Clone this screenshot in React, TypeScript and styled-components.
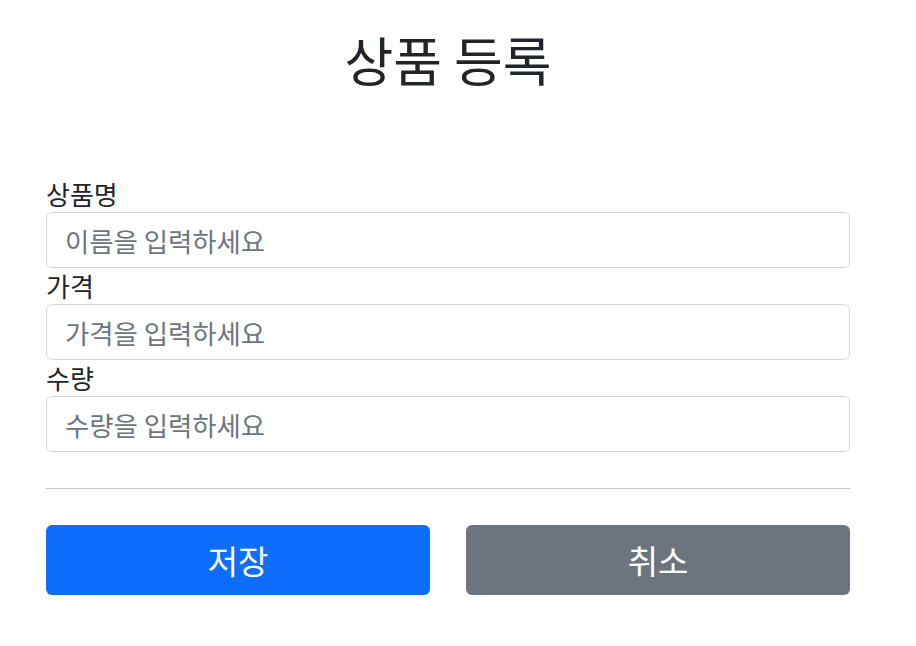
import styled, { createGlobalStyle } from 'styled-components';

const GlobalStyle = createGlobalStyle`
  body {
    margin: 0;
    background: #fff;
    color: #212529;
    font-family: "Noto Sans CJK KR", "Noto Sans", sans-serif;
  }
`;

const fields = [
  { id: 'itemName', label: '상품명', placeholder: '이름을 입력하세요' },
  { id: 'price', label: '가격', placeholder: '가격을 입력하세요' },
  { id: 'quantity', label: '수량', placeholder: '수량을 입력하세요' },
];

const App = () => {
  return (
    <>
      <GlobalStyle />
      <Container>
        <Header>
          <Title>상품 등록</Title>
        </Header>
        <Form onSubmit={(e) => e.preventDefault()}>
          {fields.map((f) => (
            <Field key={f.id}>
              <Label htmlFor={f.id}>{f.label}</Label>
              <Input id={f.id} name={f.id} placeholder={f.placeholder} />
            </Field>
          ))}
          <Divider />
          <ButtonRow>
            <Button type="submit" $variant="primary">저장</Button>
            <Button type="button" $variant="secondary">취소</Button>
          </ButtonRow>
        </Form>
      </Container>
    </>
  );
};

export default App;

const Container = styled.div`
  width: 804px;
  margin-left: 46px;
`;

const Header = styled.div`
  padding: 30px 0 88px;
  text-align: center;
`;

const Title = styled.h2`
  margin: 0;
  font-size: 53px;
  font-weight: 400;
  line-height: 58px;
`;

const Form = styled.form`
  display: flex;
  flex-direction: column;
`;

const Field = styled.div`
  display: flex;
  flex-direction: column;
`;

const Label = styled.label`
  font-size: 26px;
  line-height: 36px;
`;

const Input = styled.input`
  box-sizing: border-box;
  height: 56px;
  padding: 9px 18px;
  font-family: inherit;
  font-size: 26.4px;
  line-height: 36px;
  color: #212529;
  border: 1px solid #d3d7dc;
  border-radius: 6px;
  outline: none;

  &::placeholder {
    color: #6c757d;
  }
`;

const Divider = styled.hr`
  margin: 36px 0;
  border: 0;
  border-top: 1px solid #c8c9ca;
`;

const ButtonRow = styled.div`
  display: grid;
  grid-template-columns: 1fr 1fr;
  gap: 36px;
`;

const Button = styled.button<{ $variant: 'primary' | 'secondary' }>`
  height: 70px;
  border: 0;
  border-radius: 6px;
  font-family: inherit;
  font-size: 33px;
  color: #fff;
  background: ${(p) => (p.$variant === 'primary' ? '#0d6efd' : '#6c757d')};
  cursor: pointer;
`;
